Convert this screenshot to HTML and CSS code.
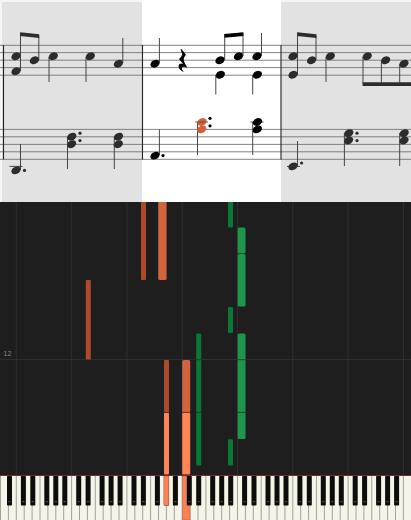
FILE: index.html
```html
<!DOCTYPE html>
<html lang="en">
<head>
    <meta charset="utf-8">
    <meta name="viewport" content="width=device-width, initial-scale=1">
    <title>Piano practice</title>
    <link rel="stylesheet" href="styles.css">
</head>
<body>
    <main class="player">
        <section class="score" aria-label="Sheet music">
            <svg viewBox="0 0 411 202">
                <defs>
                    <ellipse id="head" rx="4.9" ry="3.6" transform="rotate(-28)"/>
                    <circle id="dot" r="1.6"/>
                </defs>

                <!-- measures not being played -->
                <rect class="paper-edge" width="142" height="202"/>
                <rect class="paper-edge" x="281" width="130" height="202"/>
                <rect class="paper-dim" x="2" y="2" width="140" height="200"/>
                <rect class="paper-dim" x="281" y="2" width="130" height="200"/>

                <!-- staves -->
                <path class="staff" d="M0 45.3H411M0 52.6H411M0 60.2H411M0 67.6H411M0 75.2H411"/>
                <path class="staff" d="M0 129.4H411M0 136.8H411M0 144.4H411M0 151.8H411M0 159.3H411"/>
                <path class="barline" d="M3.5 45V159.5M142.5 45V159.5M281 45V159.5"/>

                <!-- measure 1 -->
                <g class="dim">
                    <use href="#head" x="16" y="56.3"/>
                    <use href="#head" x="16" y="71.3"/>
                    <use href="#head" x="34.4" y="60.3"/>
                    <use href="#head" x="53.3" y="56.3"/>
                    <use href="#head" x="90.3" y="56.3"/>
                    <use href="#head" x="118.4" y="63.7"/>
                    <path class="beam" d="M20 32.3L39.2 34.2V38L20 36Z"/>
                    <path class="stem" d="M20.5 34V71M38.8 36V60M49 57V82M86 57V82M122.8 38V63"/>
                    <use href="#head" x="16" y="170.4"/>
                    <use href="#dot" x="24.5" y="170.4"/>
                    <use href="#head" x="71.8" y="136.7"/>
                    <use href="#head" x="71.6" y="144.2"/>
                    <use href="#dot" x="80" y="133.2"/>
                    <use href="#dot" x="80" y="140.6"/>
                    <use href="#head" x="118.5" y="136.7"/>
                    <use href="#head" x="118.3" y="144.2"/>
                    <path class="stem" d="M20.5 144V170M67.5 137V169M114.3 137V169M9.5 166.4H22.5"/>
                </g>

                <!-- measure 2, current -->
                <g class="current">
                    <use href="#head" x="155" y="63.7"/>
                    <path d="M180.8 49L181.6 49.2L186 54.8C184.6 56.6 183.6 58.2 183.8 60C184.1 62.3 185.6 64.8 187 67L186.5 67.6C184.6 66.6 182.4 66.4 181.9 67.7C181.5 69 182.4 70.2 183.6 71.2L183.1 71.7C180.6 70.6 178.2 68.2 178.6 65.8C179 63.6 181.3 63 183.4 64.2L179 59C180.9 57.4 182.2 55.8 182.1 54C182 52.3 180.9 50.8 180.6 49.4Z"/>
                    <use href="#head" x="220" y="60.3"/>
                    <use href="#head" x="238.5" y="56.3"/>
                    <use href="#head" x="257" y="56.3"/>
                    <use href="#head" x="220.3" y="74.8"/>
                    <use href="#head" x="257.3" y="74.8"/>
                    <path class="beam" d="M224.2 34L243.4 32.3V36L224.2 37.8Z"/>
                    <path class="stem" d="M159.4 38V63M224.7 35V60M243 33V56M261.5 33V56M215.8 75V94.5M252.7 75V94.5"/>
                    <use href="#head" x="155" y="155.6"/>
                    <use href="#dot" x="163" y="155.6"/>
                    <path class="stem" d="M159.4 129.5V155M197.5 122V155M252.7 122V155M250.5 122H263.5"/>
                    <use href="#head" x="257.5" y="122"/>
                    <use href="#head" x="257.3" y="129.4"/>
                    <use href="#dot" x="210" y="118.3"/>
                    <use href="#dot" x="210" y="125.8"/>
                </g>
                <g class="playing">
                    <use href="#head" x="202" y="122"/>
                    <use href="#head" x="201.7" y="129.4"/>
                    <path class="ledger" d="M195 122H208"/>
                </g>

                <!-- measure 3 -->
                <g class="dim">
                    <use href="#head" x="293" y="56.3"/>
                    <use href="#head" x="293" y="74.8"/>
                    <use href="#head" x="311.6" y="60.3"/>
                    <use href="#head" x="330.3" y="56.3"/>
                    <use href="#head" x="367.2" y="56.3"/>
                    <use href="#head" x="385.6" y="60.3"/>
                    <use href="#head" x="404" y="63.7"/>
                    <path class="beam" d="M297 32.3L316.5 34.2V38L297 36Z"/>
                    <path class="beam" d="M362.6 82.3H411V86H362.6Z"/>
                    <path class="stem" d="M297.5 34V75M316 36V60M326 57V82M363 57V84M381.4 61V84M399.7 64V84"/>
                    <use href="#head" x="293" y="166.4"/>
                    <use href="#dot" x="301.6" y="163"/>
                    <use href="#head" x="348.8" y="133.2"/>
                    <use href="#head" x="348.6" y="140.5"/>
                    <use href="#dot" x="357" y="133.2"/>
                    <use href="#dot" x="357" y="140.6"/>
                    <use href="#head" x="404.2" y="133.2"/>
                    <use href="#head" x="404" y="140.5"/>
                    <path class="stem" d="M297.5 141V166M344.4 133V166M399.7 133V166M287 166.4H300"/>
                </g>
            </svg>
        </section>

        <section class="roll" aria-label="Falling notes">
            <svg viewBox="0 202 411 273">
                <path class="grid" d="M16.3 202V475M71.6 202V475M126.9 202V475M182.2 202V475M237.5 202V475M292.8 202V475M348.1 202V475M403.4 202V475M0 359.5H411"/>
                <text class="measure" x="3.5" y="356">12</text>

                <!-- left hand -->
                <g class="left-black">
                    <rect x="141" y="200" width="5" height="80" rx="1"/>
                    <rect x="85.8" y="280" width="5" height="79.5" rx="1"/>
                    <rect x="164" y="360" width="5" height="54" rx="1"/>
                </g>
                <g class="left-white">
                    <rect x="158.2" y="200" width="8.4" height="80" rx="1.5"/>
                    <rect x="182.2" y="360" width="8" height="54" rx="1.5"/>
                </g>
                <g class="left-active">
                    <rect x="164" y="413" width="5" height="61.5" rx="1"/>
                    <rect x="182.2" y="413" width="8" height="61.5" rx="1"/>
                </g>

                <!-- right hand -->
                <g class="right-black">
                    <rect x="228" y="200" width="5" height="27.4" rx="1"/>
                    <rect x="228" y="307" width="5" height="26" rx="1"/>
                    <rect x="196.2" y="333.4" width="5" height="132" rx="1"/>
                    <rect x="228" y="439.3" width="5" height="26.2" rx="1"/>
                </g>
                <g class="right-white">
                    <rect x="237.7" y="227.4" width="7.8" height="26.2" rx="1.5"/>
                    <rect x="237.7" y="254" width="7.8" height="52.6" rx="1.5"/>
                    <rect x="237.7" y="333.4" width="7.8" height="105.6" rx="1.5"/>
                </g>
                <path class="split" d="M196 359.7H201.5M196 412.4H201.5M237.5 359.7H246M237.5 412.4H246M164 412.4H169.5M182 412.4H190.5"/>
            </svg>
        </section>

        <section class="keyboard" aria-label="Piano keys">
            <svg viewBox="0 475 411 45">
                <defs>
                    <g id="black">
                        <rect class="key-black" y="476" width="5" height="29.4" rx="0.6"/>
                        <rect class="key-shine" x="1.3" y="501" width="2.4" height="1.2"/>
                    </g>
                    <path id="gaps" class="key-gap" d="M0 476V520M7.9 476V520M15.8 476V520M23.7 476V520M31.6 476V520M39.5 476V520M47.4 476V520"/>
                    <g id="octave">
                        <use href="#black" x="4.6"/>
                        <use href="#black" x="14"/>
                        <use href="#black" x="28"/>
                        <use href="#black" x="37"/>
                        <use href="#black" x="46"/>
                    </g>
                </defs>
                <use href="#gaps" x="-39"/>
                <use href="#gaps" x="16.3"/>
                <use href="#gaps" x="71.6"/>
                <use href="#gaps" x="126.9"/>
                <use href="#gaps" x="182.2"/>
                <use href="#gaps" x="237.5"/>
                <use href="#gaps" x="292.8"/>
                <use href="#gaps" x="348.1"/>
                <path class="key-gap" d="M403.4 476V520"/>
                <rect class="key-pressed" x="182.4" y="476" width="7.6" height="44"/>
                <use href="#black" x="7"/>
                <use href="#octave" x="16.3"/>
                <use href="#octave" x="71.6"/>
                <use href="#octave" x="126.9"/>
                <use href="#octave" x="182.2"/>
                <use href="#octave" x="237.5"/>
                <use href="#octave" x="292.8"/>
                <use href="#octave" x="348.1"/>
                <rect class="key-pressed" x="163.9" y="476" width="5" height="29.4"/>
                <rect class="felt" y="475" width="411" height="1"/>
            </svg>
        </section>
    </main>
</body>
</html>
```

FILE: styles.css
```css
body {
    margin: 0;
    background: #1e1e1e;
    font-family: "Liberation Sans", Arial, sans-serif;
}

.player {
    display: flex;
    flex-direction: column;
}

svg {
    display: block;
    width: 100%;
    height: auto;
}

/* sheet music */
.score {
    background: #fff;
}

.paper-edge {
    fill: #f4f4f4;
}

.paper-dim {
    fill: #e2e2e2;
}

.staff {
    stroke: #666;
    stroke-width: 0.8;
}

.barline {
    stroke: #222;
    stroke-width: 1.1;
}

.dim {
    fill: #2c2c2c;
    stroke: none;
}

.current {
    fill: #000;
}

.playing {
    fill: #d2603a;
}

.stem {
    fill: none;
    stroke: #333;
    stroke-width: 0.9;
}

.ledger {
    stroke: #7a3a26;
    stroke-width: 0.8;
}

/* falling notes */
.roll {
    background: #1e1e1e;
}

.grid {
    stroke: #2e2e2e;
    stroke-width: 1;
}

.measure {
    fill: #858585;
    font-size: 7px;
}

.left-black {
    fill: #ae4a2b;
}

.left-white {
    fill: #cf643e;
}

.left-active {
    fill: #ff8556;
}

.right-black {
    fill: #097735;
}

.right-white {
    fill: #1f954b;
}

.split {
    stroke: rgba(20, 30, 20, 0.6);
    stroke-width: 1;
}

/* piano */
.keyboard {
    background: #f5f4e8;
}

.key-gap {
    stroke: #a3a298;
    stroke-width: 1;
}

.key-black {
    fill: #0d0d0c;
}

.key-shine {
    fill: #444;
}

.key-pressed {
    fill: #fa8156;
    stroke: #a85236;
    stroke-width: 0.4;
}

.felt {
    fill: #702f30;
}
```
